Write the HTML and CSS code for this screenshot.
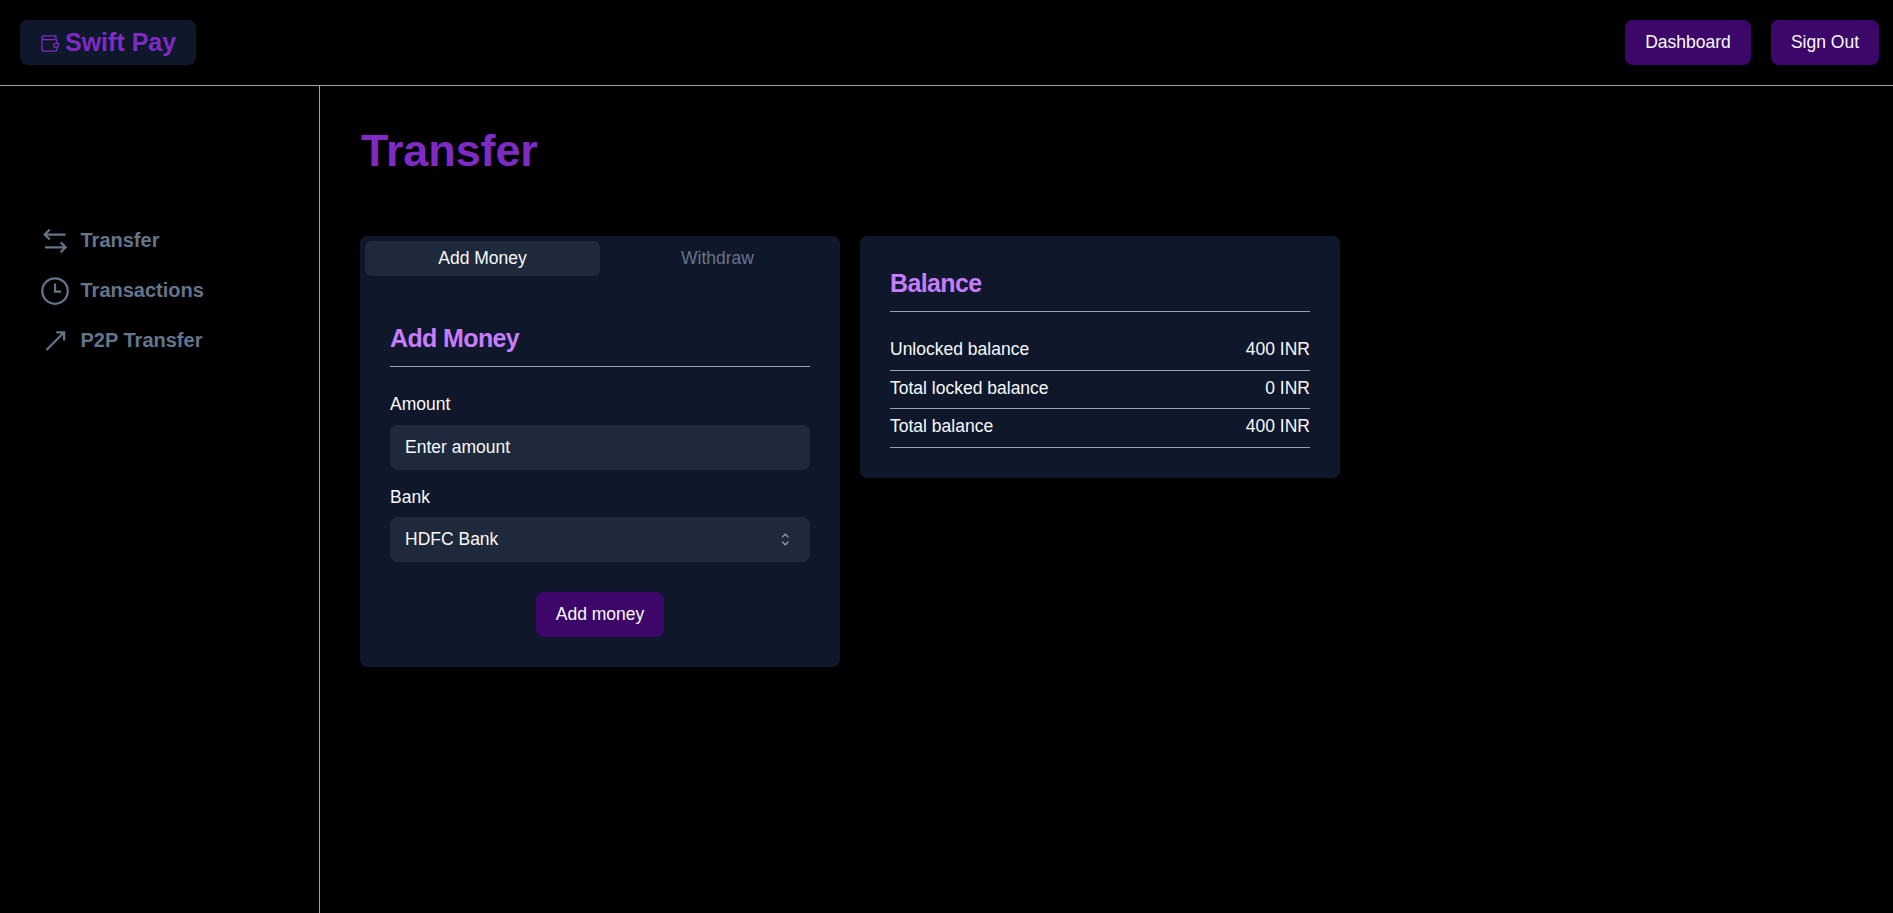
FILE: index.html
```html
<!DOCTYPE html>
<html lang="en">
<head>
<meta charset="utf-8">
<title>Swift Pay</title>
<link rel="stylesheet" href="styles.css">
</head>
<body>
<header class="topbar">
  <a class="logo">
    <svg class="logo-icon" viewBox="0 0 20 20"><path d="M2 4.6V16Q2 18 4 18H15Q17 18 17 16V14.3M17 10.3V8.5Q17 6.6 15 6.6H4Q2 6.6 2 4.6Q2 2.9 4 2.9H16V6.6M18.5 10.3H15.4Q13.5 10.3 13.5 12.3T15.4 14.3H16.8L18.5 12.8Z"/></svg>
    <span>Swift Pay</span>
  </a>
  <nav class="actions">
    <button class="btn btn-dashboard">Dashboard</button>
    <button class="btn btn-signout">Sign Out</button>
  </nav>
</header>
<div class="shell">
  <aside class="sidebar">
    <a class="nav-item"><svg class="nav-icon" viewBox="0 0 24 24"><path d="M20.5 6.8H4M7.8 2.8 3.8 6.8l4 4M4 17h16.5M16.5 13l4 4-4 4"/></svg><span>Transfer</span></a>
    <a class="nav-item"><svg class="nav-icon" viewBox="0 0 24 24"><circle cx="12" cy="12" r="10.2"/><path d="M12 6v6.4h4.8"/></svg><span>Transactions</span></a>
    <a class="nav-item"><svg class="nav-icon" viewBox="0 0 24 24"><path d="M5.2 19.2 19.3 5M13 5h6.3v6.6"/></svg><span>P2P Transfer</span></a>
  </aside>
  <main class="content">
    <h1 class="page-title">Transfer</h1>
    <div class="cards">
      <section class="card transfer-card">
        <div class="tabs">
          <button class="tab tab-active">Add Money</button>
          <button class="tab">Withdraw</button>
        </div>
        <div class="panel">
          <h2 class="card-title">Add Money</h2>
          <label class="label label-amount">Amount</label>
          <div class="field">Enter amount</div>
          <label class="label label-bank">Bank</label>
          <div class="field field-bank">HDFC Bank
            <svg class="chevrons" viewBox="0 0 15 15"><path d="M4.8 5.8 7.3 3.3l2.5 2.5M4.8 9.2l2.5 2.5 2.5-2.5"/></svg>
          </div>
          <button class="btn btn-submit">Add money</button>
        </div>
      </section>
      <section class="card balance-card">
        <h2 class="card-title">Balance</h2>
        <div class="rows">
          <div class="row row-first"><span>Unlocked balance</span><span>400 INR</span></div>
          <div class="row row-second"><span>Total locked balance</span><span>0 INR</span></div>
          <div class="row"><span>Total balance</span><span>400 INR</span></div>
        </div>
      </section>
    </div>
  </main>
</div>
</body>
</html>
```
FILE: styles.css
```css
* { box-sizing: border-box; }
body {
  margin: 0;
  height: 100vh;
  display: flex;
  flex-direction: column;
  overflow: hidden;
  background: #000;
  color: #f8fafc;
  font: 17.5px/25px "Liberation Sans", Arial, sans-serif;
}
h1, h2 { margin: 0; }
button { font: inherit; color: inherit; border: 0; padding: 0; background: none; }
svg { fill: none; stroke: currentColor; flex: none; }

.topbar {
  flex: none;
  height: 86px;
  padding: 20px 14px 0 20px;
  display: flex;
  justify-content: space-between;
  align-items: flex-start;
  border-bottom: 1px solid #9ca3af;
}
.logo {
  width: 176px;
  height: 45px;
  padding-left: 20px;
  display: flex;
  align-items: center;
  gap: 5px;
  border-radius: 7.5px;
  background: #0f172a;
  color: #7e2bc4;
  font-size: 25px;
  font-weight: 700;
}
.logo-icon { width: 20px; height: 20px; stroke-width: 1.25; stroke-linejoin: round; }
.actions { display: flex; gap: 20px; }
.btn { height: 45px; border-radius: 7.5px; background: #3c0769; }
.btn-dashboard { width: 126px; }
.btn-signout { width: 108px; }

.shell { flex: 1; display: flex; min-height: 0; }
.sidebar {
  flex: none;
  width: 320px;
  padding: 135px 0 0 40px;
  display: flex;
  flex-direction: column;
  gap: 10px;
  border-right: 1px solid #9ca3af;
  color: #64748b;
  font-size: 20px;
  font-weight: 700;
}
.nav-item { height: 40px; padding-bottom: 1px; display: flex; align-items: center; gap: 10.5px; }
.nav-icon { width: 30px; height: 30px; stroke-width: 1.8; }

.content { padding: 35px 40px 0; }
.page-title { height: 115px; padding-left: 1px; color: #7e2bc4; font-size: 45px; line-height: 60px; letter-spacing: -0.1px; }
.cards { display: flex; align-items: flex-start; gap: 20px; }
.card { width: 480px; border-radius: 7.5px; background: #0f172a; }
.transfer-card { height: 431px; padding: 5px; }
.tabs { display: flex; height: 35px; }
.tab { flex: 1; padding-bottom: 1px; border-radius: 6px; color: #64748b; }
.tab-active { background: #1e293b; color: #f8fafc; }
.panel { padding: 43px 25px 0; display: flex; flex-direction: column; }
.card-title {
  height: 48px;
  border-bottom: 1px solid #94a3b8;
  color: #c77dff;
  font-size: 25px;
  line-height: 38px;
  letter-spacing: -0.025em;
}
.label-amount { margin-top: 25px; }
.label-bank { margin-top: 15px; }
.field {
  height: 45px;
  margin-top: 8px;
  padding: 0 15px;
  display: flex;
  align-items: center;
  justify-content: space-between;
  border-radius: 7.5px;
  background: #1e293b;
}
.field-bank { margin-top: 7px; }
.chevrons { width: 19px; height: 19px; color: #94a3b8; stroke-width: 1; }
.btn-submit { align-self: center; width: 128px; margin-top: 30px; }
.balance-card { height: 242px; padding: 28px 30px 0; }
.rows { padding-top: 25px; }
.row {
  height: 39px;
  padding-top: 5px;
  display: flex;
  justify-content: space-between;
  border-bottom: 1px solid #94a3b8;
}
.row-first { height: 34px; padding-top: 0; }
.row-second { height: 38px; }
```
